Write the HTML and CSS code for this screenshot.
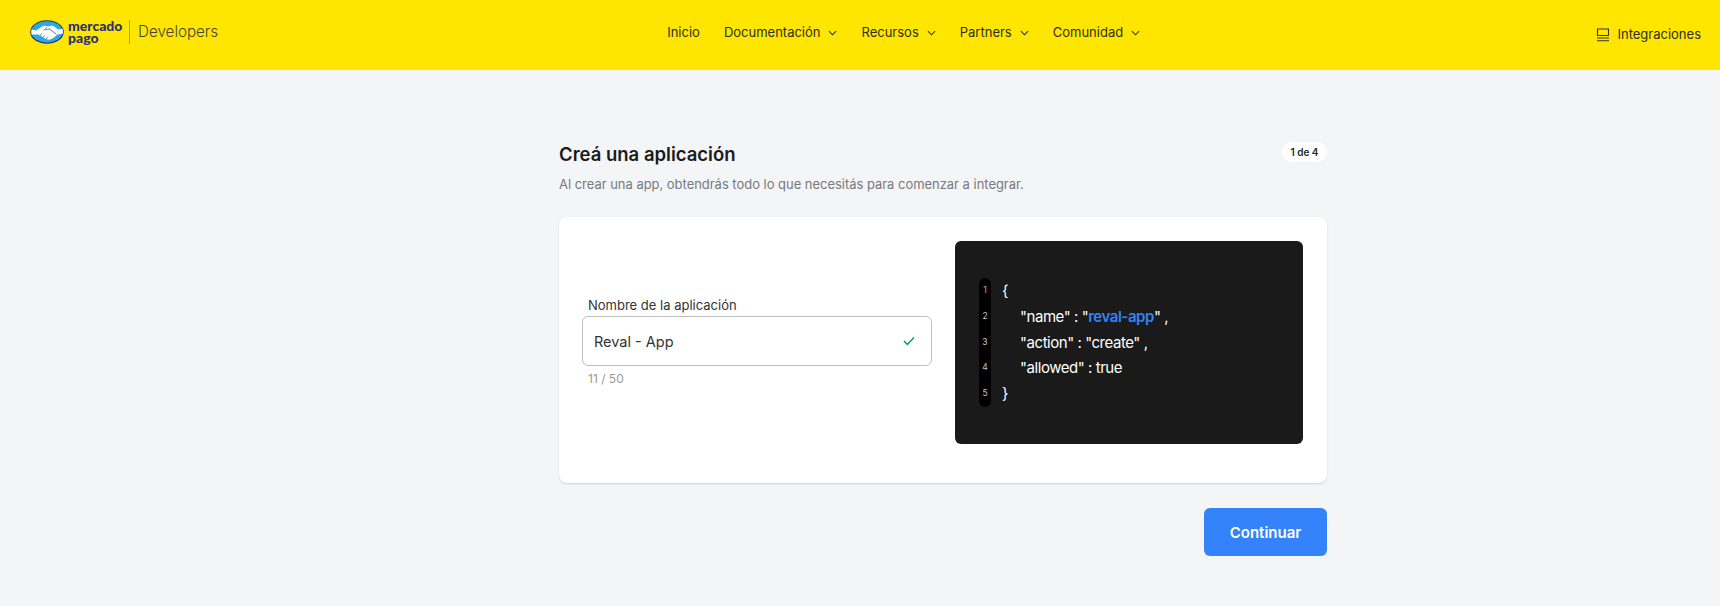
FILE: index.html
```html
<!DOCTYPE html>
<html lang="es">
<head>
  <meta charset="UTF-8" />
  <title>Mercado Pago Developers</title>
  <link rel="stylesheet" href="styles.css">
</head>
<body>

<header class="topbar">
  <a class="brand">
    <svg class="brand-mark" viewBox="0 0 34 24" width="34" height="24">
      <ellipse cx="17" cy="12" rx="16.8" ry="11.8" fill="#2d3277"/>
      <ellipse cx="17" cy="11.8" rx="15.8" ry="10.6" fill="#29abe2"/>
      <path d="M1.4 9.5 L6 10.5 L12 6.4 C14 5.2 16 5.6 18 6.6 C20 5.4 23 5.4 25 7 L28 9.6 L32.6 9 L33 13.6 L27.5 14.5 L24 17.5 L20.5 19.6 C18.5 20 16.5 19.6 15 18.6 L8.5 14.6 L1.4 14.6 Z" fill="#fff"/>
      <path d="M10 15.4 L12 13.5 M13 17.4 L15 15.4 M16 18.8 L18 16.8 M13.5 10.5 L17.2 7.4 M15.5 9.6 C17 10 18 9 19.4 9 L26.4 14.2" stroke="#2d3277" stroke-width=".7" fill="none"/>
    </svg>
    <span class="brand-name">mercado<br>pago</span>
    <span class="brand-sep"></span>
    <span class="brand-dev">Developers</span>
  </a>

  <nav class="nav">
    <a>Inicio</a>
    <a>Documentación <svg class="chev" viewBox="0 0 10 6"><path d="M1 1l4 4 4-4"/></svg></a>
    <a>Recursos <svg class="chev" viewBox="0 0 10 6"><path d="M1 1l4 4 4-4"/></svg></a>
    <a>Partners <svg class="chev" viewBox="0 0 10 6"><path d="M1 1l4 4 4-4"/></svg></a>
    <a>Comunidad <svg class="chev" viewBox="0 0 10 6"><path d="M1 1l4 4 4-4"/></svg></a>
  </nav>

  <a class="integrations">
    <svg viewBox="0 0 14 14" width="14" height="14"><path d="M1.5 1h11v6.5h-11zM1 10h12M1 12.8h12" fill="none" stroke="#333" stroke-width="1.1"/></svg>
    Integraciones
  </a>
</header>

<main class="page">
  <div class="heading">
    <div>
      <h1>Creá una aplicación</h1>
      <p>Al crear una app, obtendrás todo lo que necesitás para comenzar a integrar.</p>
    </div>
    <span class="step">1 de 4</span>
  </div>

  <section class="card">
    <div class="field">
      <label>Nombre de la aplicación</label>
      <div class="input">
        <span>Reval - App</span>
        <svg viewBox="0 0 12 10" width="12" height="10"><path d="M1 5l3.4 3.4L11 1.6" fill="none" stroke="#00a650" stroke-width="1.5"/></svg>
      </div>
      <small>11 / 50</small>
    </div>

    <div class="code">
      <ol class="gutter">
        <li class="current">1</li>
        <li>2</li>
        <li>3</li>
        <li>4</li>
        <li>5</li>
      </ol>
      <div class="lines">
        <div>{</div>
        <div class="in">"name" : "<b>reval-app</b>" ,</div>
        <div class="in">"action" : "create" ,</div>
        <div class="in">"allowed" : true</div>
        <div>}</div>
      </div>
    </div>
  </section>

  <div class="actions">
    <button>Continuar</button>
  </div>
</main>

</body>
</html>
```

FILE: styles.css
```css
body {
  margin: 0;
  height: 606px;
  overflow: hidden;
  background-color: #f4f5f7;
  font-family: "Inter", "Lato", sans-serif;
  color: #1f1f1f;
}

.topbar {
  height: 70px;
  background-color: #ffe600;
  display: flex;
  align-items: flex-start;
  padding: 0 19px 0 30px;
}

.brand {
  display: flex;
  align-items: center;
  margin-top: 19px;
  height: 25px;
}

.brand-mark {
  margin-right: 4px;
}

.brand-name {
  font-family: "Lato", sans-serif;
  font-size: 14px;
  line-height: 11.5px;
  font-weight: 900;
  color: #2d3277;
  width: 61px;
}

.brand-sep {
  width: 1px;
  height: 24px;
  background-color: #b0a31e;
  margin-right: 8px;
}

.brand-dev {
  font-size: 15.2px;
  font-weight: 300;
  color: #444;
}

.nav {
  display: flex;
  gap: 24px;
  margin-left: 449px;
  margin-top: 24px;
  font-size: 13px;
  line-height: 17px;
  color: #2e2e1a;
}

.nav a {
  display: flex;
  align-items: center;
  gap: 8px;
  white-space: nowrap;
}

.chev {
  width: 9px;
  height: 6px;
  fill: none;
  stroke: #333;
  stroke-width: 1.2;
}

.integrations {
  margin-left: auto;
  margin-top: 26px;
  display: flex;
  align-items: center;
  gap: 7px;
  font-size: 13px;
  line-height: 17px;
  color: #2e2e1a;
}

.page {
  width: 768px;
  margin-left: 559px;
  padding-top: 72px;
}

.heading {
  display: flex;
  justify-content: space-between;
  align-items: flex-start;
}

.heading h1 {
  margin: 0;
  font-size: 18.5px;
  line-height: 24px;
  font-weight: 600;
  color: #1a1a1a;
}

.heading p {
  margin: 9px 0 0;
  font-size: 12.95px;
  line-height: 18px;
  color: #77797e;
}

.step {
  background: #fff;
  border-radius: 10px;
  font-size: 10px;
  font-weight: 600;
  line-height: 20px;
  padding: 0 8.5px;
}

.card {
  margin-top: 24px;
  height: 266px;
  box-sizing: border-box;
  background: #fff;
  border-radius: 8px;
  box-shadow: 0 1px 2px rgba(0, 0, 0, .15);
  display: flex;
  padding: 24px 23px 0;
  gap: 23px;
}

.field {
  width: 350px;
  padding-top: 56px;
}

.field label {
  display: block;
  padding-left: 6px;
  font-size: 13px;
  line-height: 16px;
  color: #333;
}

.input {
  margin-top: 3px;
  height: 50px;
  box-sizing: border-box;
  border: 1px solid #bfbfbf;
  border-radius: 6px;
  display: flex;
  align-items: center;
  justify-content: space-between;
  padding: 0 16px 0 11px;
  font-size: 14.5px;
  color: #333;
}

.field small {
  display: block;
  padding: 5px 0 0 6px;
  font-size: 12px;
  color: #999;
}

.code {
  width: 348px;
  height: 203px;
  box-sizing: border-box;
  background-color: #1a1a1a;
  border-radius: 6px;
  padding: 37px 0 0 24px;
  display: flex;
  color: #fff;
}

.gutter {
  list-style: none;
  margin: 0;
  padding: 0;
  width: 12px;
  height: 129px;
  background: #000;
  border-radius: 6px;
  text-align: center;
  font-size: 8.5px;
  line-height: 25.8px;
  color: #c0c8d0;
}

.gutter .current {
  color: #e8a33d;
}

.lines {
  margin-left: 11px;
  font-size: 15px;
  line-height: 25.8px;
  letter-spacing: -.45px;
  color: #fff;
}

.lines .in {
  padding-left: 18px;
}

.lines b {
  font-weight: 600;
  color: #3483fa;
}

.actions {
  display: flex;
  justify-content: flex-end;
  margin-top: 25px;
}

.actions button {
  width: 123px;
  height: 48px;
  border: none;
  border-radius: 6px;
  background-color: #3483fa;
  color: #fff;
  font-family: inherit;
  font-size: 15px;
  font-weight: 600;
}
```
